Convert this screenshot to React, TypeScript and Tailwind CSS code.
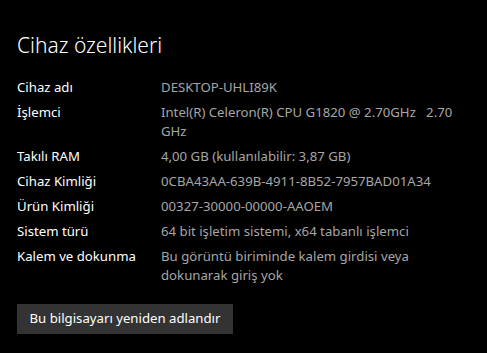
const rows: { label: string; value: string }[] = [
  { label: 'Cihaz adı', value: 'DESKTOP-UHLI89K' },
  { label: 'İşlemci', value: 'Intel(R) Celeron(R) CPU G1820 @ 2.70GHz   2.70 GHz' },
  { label: 'Takılı RAM', value: '4,00 GB (kullanılabilir: 3,87 GB)' },
  { label: 'Cihaz Kimliği', value: '0CBA43AA-639B-4911-8B52-7957BAD01A34' },
  { label: 'Ürün Kimliği', value: '00327-30000-00000-AAOEM' },
  { label: 'Sistem türü', value: '64 bit işletim sistemi, x64 tabanlı işlemci' },
  { label: 'Kalem ve dokunma', value: 'Bu görüntü biriminde kalem girdisi veya dokunarak giriş yok' },
]

export default function App() {
  return (
    <div
      className="w-[487px] h-[353px] bg-black text-white overflow-hidden pl-[17px]"
      style={{ fontFamily: '"Noto Sans", "Open Sans", sans-serif' }}
    >
      <h1 className="pt-[31px] text-[21px] leading-[28px] font-light">Cihaz özellikleri</h1>

      <div className="mt-[19px] flex flex-col gap-[6px] text-[13.2px] leading-[19px]">
        {rows.map((row) => (
          <div key={row.label} className="flex">
            <div className="w-[144px] shrink-0">{row.label}</div>
            <div className="w-[300px] text-[#a6a6a6] whitespace-pre-wrap">{row.value}</div>
          </div>
        ))}
      </div>

      <button className="mt-[19px] flex items-center justify-center w-[216px] h-[30px] bg-[#333333] text-[13.2px] text-white">
        Bu bilgisayarı yeniden adlandır
      </button>
    </div>
  )
}
